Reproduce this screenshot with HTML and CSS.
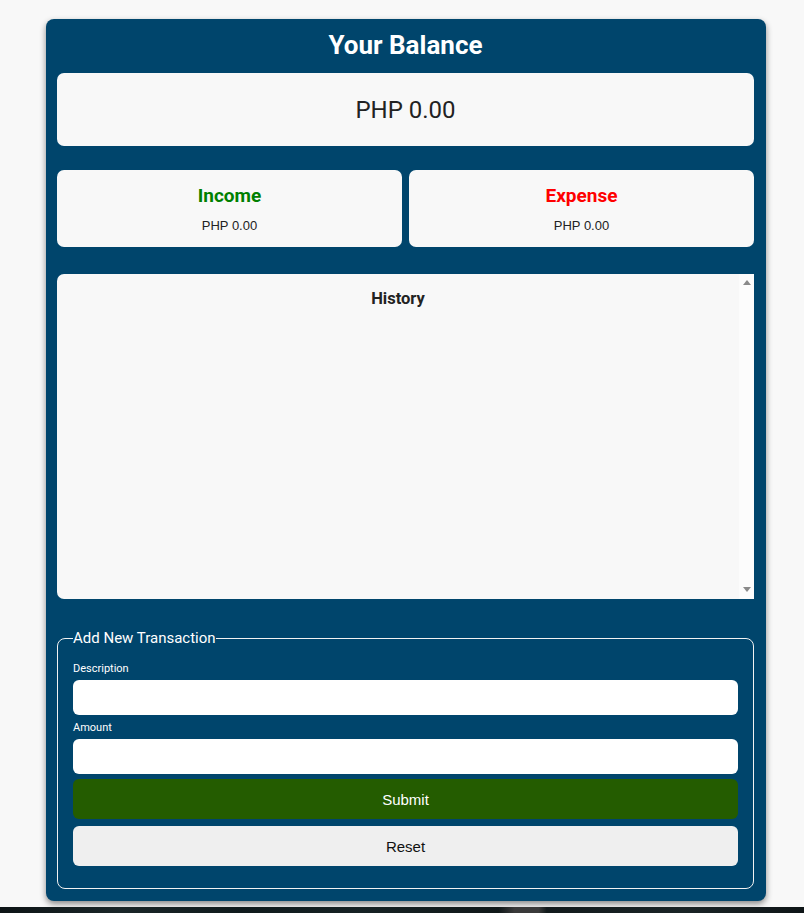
FILE: index.html
```html
<!DOCTYPE html>
<html lang="en">
<head>
<meta charset="utf-8">
<title>Expense Tracker</title>
<link rel="stylesheet" href="styles.css">
</head>
<body>
<main class="app">
  <h1 class="title">Your Balance</h1>
  <div class="card balance">PHP 0.00</div>
  <div class="summary">
    <div class="card stat">
      <h3 class="stat-title income">Income</h3>
      <p class="stat-amount">PHP 0.00</p>
    </div>
    <div class="card stat">
      <h3 class="stat-title expense">Expense</h3>
      <p class="stat-amount">PHP 0.00</p>
    </div>
  </div>
  <section class="card history">
    <div class="history-body">
      <h4 class="history-title">History</h4>
      <ul class="history-list"></ul>
    </div>
    <div class="scrollbar" aria-hidden="true">
      <span class="arrow up"></span>
      <span class="arrow down"></span>
    </div>
  </section>
  <form class="form" onsubmit="return false">
    <fieldset class="fields">
      <legend class="legend">Add New Transaction</legend>
      <label class="label first" for="desc">Description</label>
      <input class="input" id="desc" type="text">
      <label class="label" for="amt">Amount</label>
      <input class="input" id="amt" type="number">
      <button class="btn submit" type="submit">Submit</button>
      <button class="btn reset" type="reset">Reset</button>
    </fieldset>
  </form>
</main>
<div class="strip"></div>
</body>
</html>
```
FILE: styles.css
```css
html, body {
  margin: 0;
  padding: 0;
  background: #f8f8f8;
}
body {
  font-family: Roboto, "Liberation Sans", Arial, sans-serif;
  color: #222;
  padding-top: 19px;
}
.app {
  width: 720px;
  margin-left: 46px;
  box-sizing: border-box;
  background: #00456c;
  border-radius: 8px;
  padding: 0 12px 12px 11px;
  box-shadow: 0 3px 6px rgba(0, 0, 0, 0.45);
}
.title {
  margin: 0;
  padding: 10px 0 12px;
  font-size: 26px;
  line-height: 32px;
  font-weight: 700;
  color: #fff;
  text-align: center;
}
.card {
  background: #f8f8f8;
  border-radius: 7px;
}
.balance {
  height: 73px;
  display: flex;
  align-items: center;
  justify-content: center;
  font-size: 24px;
  color: #222;
}
.summary {
  display: grid;
  grid-template-columns: 1fr 1fr;
  gap: 7px;
  margin-top: 24px;
}
.stat {
  height: 77px;
  display: flex;
  flex-direction: column;
  align-items: center;
  padding-top: 15px;
  box-sizing: border-box;
}
.stat-title {
  margin: 0;
  font-size: 19px;
  line-height: 22px;
  font-weight: 700;
}
.income { color: #008000; }
.expense { color: #ff0000; }
.stat-amount {
  margin: 11px 0 0;
  font-family: "Liberation Sans", Arial, sans-serif;
  font-size: 13px;
  line-height: 15px;
  color: #222;
}
.history {
  margin-top: 27px;
  height: 325px;
  display: grid;
  grid-template-columns: 1fr 15px;
  border-radius: 7px 0 0 7px;
  overflow: hidden;
}
.history-body {
  padding-top: 15px;
}
.history-title {
  margin: 0;
  text-align: center;
  font-size: 16.5px;
  line-height: 19px;
  font-weight: 700;
  color: #222;
}
.history-list {
  margin: 0;
  padding: 0;
  list-style: none;
}
.scrollbar {
  background: #fcfcfc;
  display: flex;
  flex-direction: column;
  justify-content: space-between;
  align-items: center;
  padding: 6px 0 7px;
}
.arrow {
  width: 0;
  height: 0;
  border-left: 4.5px solid transparent;
  border-right: 4.5px solid transparent;
}
.arrow.up {
  border-bottom: 5px solid #8a8a8a;
}
.arrow.down {
  border-top: 5px solid #8a8a8a;
}
.form {
  margin-top: 31px;
}
.fields {
  margin: 0;
  border: 1px solid #f2f2f2;
  border-radius: 8px;
  padding: 0 15px 22px;
  display: flex;
  flex-direction: column;
}
.legend {
  padding: 0;
  font-size: 15px;
  line-height: 16px;
  color: #fff;
}
.label {
  font-size: 11px;
  line-height: 13px;
  color: #fff;
  margin-top: 6px;
}
.label.first {
  margin-top: 16px;
}
.input {
  margin: 5px 0 0;
  height: 35px;
  box-sizing: border-box;
  border: none;
  border-radius: 6px;
  background: #fff;
  padding: 0 10px;
  font-size: 14px;
}
.btn {
  height: 40px;
  border: none;
  border-radius: 6px;
  font-family: "Liberation Sans", Arial, sans-serif;
  font-size: 15px;
  cursor: pointer;
}
.submit {
  margin-top: 5px;
  background: #245c00;
  color: #fff;
}
.reset {
  margin-top: 7px;
  background: #efefef;
  color: #111;
}
.strip {
  margin-top: 6px;
  height: 10px;
  background: linear-gradient(90deg, #0d1416 0%, #1a2628 15%, #0f1a1c 30%, #162224 45%, #101819 62%, #3a3a3a 64%, #3a3a3a 67%, #121a1c 68%, #1a2426 85%, #0e1517 100%);
}
```
